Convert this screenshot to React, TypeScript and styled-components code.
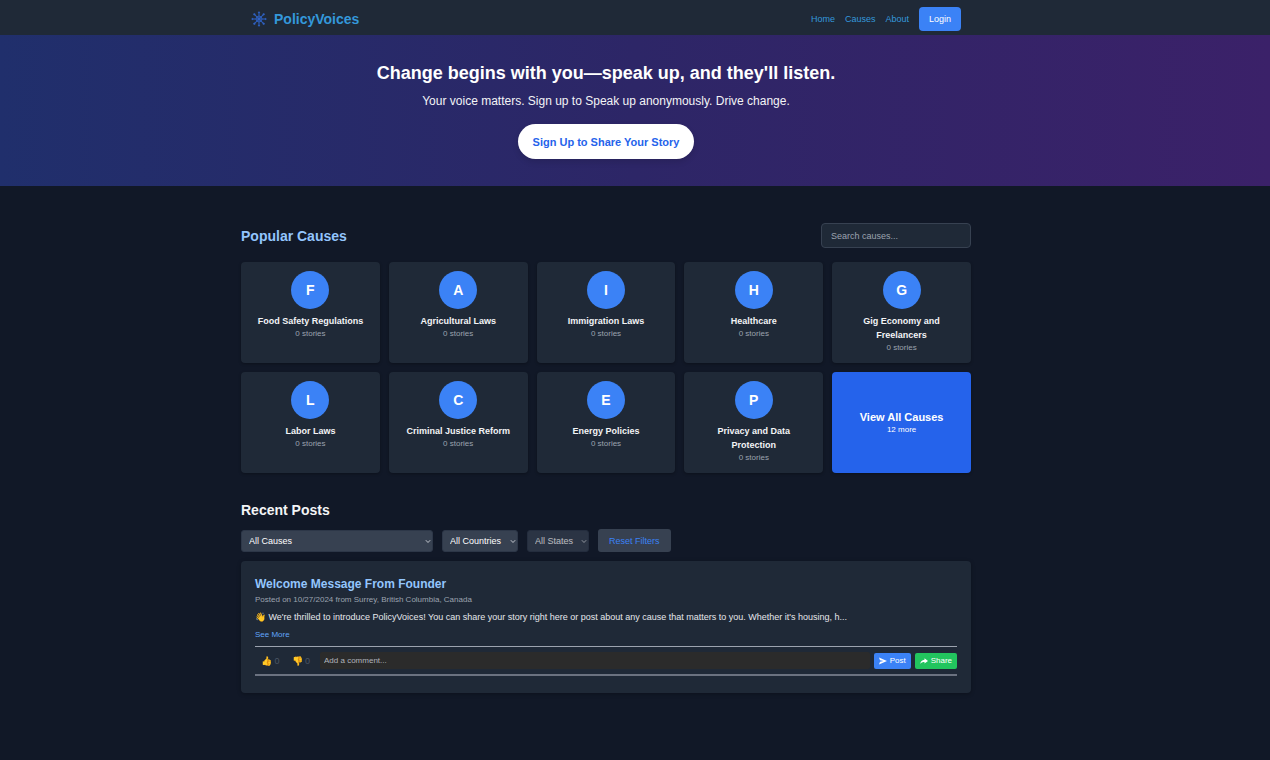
import React from "react";
import styled, { createGlobalStyle } from "styled-components";

const GlobalStyle = createGlobalStyle`
  *, *::before, *::after { box-sizing: border-box; }
  body {
    margin: 0;
    background: #111827;
    color: #f3f4f6;
    font-family: "Liberation Sans", Arial, Helvetica, sans-serif;
    font-size: 9px;
    line-height: 14px;
  }
  h1, h2, h3, p { margin: 0; }
  button, input, select { font: inherit; margin: 0; }
  a { color: inherit; text-decoration: none; }
`;

const Page = styled.div`
  min-height: 100vh;
  display: flex;
  flex-direction: column;
`;

/* Every band keeps a gutter on the right, so the column sits left of centre. */
const Band = styled.div`
  padding-right: 58px;
`;

const Container = styled.div`
  width: 100%;
  max-width: 730px;
  margin: 0 auto;
`;

const Header = styled(Band).attrs({ as: "header" })`
  background: #1f2937;
`;

const NavBar = styled(Container)`
  display: flex;
  align-items: center;
  justify-content: space-between;
  padding: 7px 10px 4px;
`;

const Brand = styled.a`
  display: flex;
  align-items: center;
  gap: 7px;
  color: #3498db;
  font-size: 14px;
  font-weight: 700;
`;

const NavLinks = styled.nav`
  display: flex;
  align-items: center;
  gap: 10px;
  color: #3498db;
`;

const LoginButton = styled.button`
  height: 24px;
  padding: 0 10px;
  border: 0;
  border-radius: 4px;
  background: #3b82f6;
  color: #fff;
`;

const Hero = styled(Band).attrs({ as: "section" })`
  display: flex;
  flex-direction: column;
  align-items: center;
  padding-top: 26px;
  padding-bottom: 27px;
  text-align: center;
  background: linear-gradient(90deg, #202f6c, #2d2667 50%, #3b2169);
`;

const HeroTitle = styled.h1`
  font-size: 18px;
  line-height: 24px;
  color: #fff;
`;

const HeroText = styled.p`
  margin-top: 8px;
  font-size: 12px;
  line-height: 16px;
`;

const SignUpButton = styled.button`
  height: 35px;
  margin-top: 15px;
  padding: 0 15px;
  border: 0;
  border-radius: 18px;
  background: #fff;
  color: #2563eb;
  font-size: 11px;
  font-weight: 700;
  box-shadow: 0 3px 6px rgba(0, 0, 0, 0.12);
`;

const Main = styled(Band).attrs({ as: "main" })`
  flex: 1;
  padding-top: 37px;
  padding-bottom: 62px;
`;

const SectionHead = styled.div`
  display: flex;
  align-items: center;
  justify-content: space-between;
  margin-bottom: 14px;
`;

const SectionTitle = styled.h2<{ $tone?: string }>`
  font-size: 14px;
  line-height: 20px;
  color: ${(p) => p.$tone ?? "#f3f4f6"};
`;

const SearchInput = styled.input`
  width: 150px;
  height: 25px;
  padding: 0 9px;
  border: 1px solid #374151;
  border-radius: 4px;
  background: #1f2937;
  color: #f3f4f6;
  &::placeholder { color: #9ca3af; opacity: 1; }
`;

const CauseGrid = styled.div`
  display: grid;
  grid-template-columns: repeat(5, 1fr);
  gap: 9px;
`;

const CauseCard = styled.a`
  display: flex;
  flex-direction: column;
  align-items: center;
  min-height: 101px;
  padding: 9px;
  border-radius: 4px;
  background: #1f2937;
  text-align: center;
  box-shadow: 0 1px 3px rgba(0, 0, 0, 0.3);
`;

const AllCausesCard = styled(CauseCard)`
  justify-content: center;
  background: #2563eb;
  color: #fff;
`;

const Initial = styled.span`
  display: flex;
  align-items: center;
  justify-content: center;
  width: 38px;
  height: 38px;
  margin-bottom: 5px;
  border-radius: 50%;
  background: #3b82f6;
  color: #fff;
  font-size: 14px;
  font-weight: 700;
`;

const CauseName = styled.h3<{ $large?: boolean }>`
  max-width: 112px;
  font-size: ${(p) => (p.$large ? 11 : 9)}px;
  line-height: 14px;
`;

const StoryCount = styled.span<{ $bright?: boolean }>`
  font-size: 8px;
  line-height: 12px;
  color: ${(p) => (p.$bright ? "#fff" : "#9ca3af")};
`;

const Posts = styled.section`
  padding-top: 27px;
`;

const Filters = styled.div`
  display: flex;
  align-items: center;
  gap: 9px;
  margin: 9px 0;
`;

const SelectWrap = styled.label<{ $width: number; $dim?: boolean }>`
  position: relative;
  display: block;
  width: ${(p) => p.$width}px;
  opacity: ${(p) => (p.$dim ? 0.7 : 1)};
`;

const Select = styled.select`
  display: block;
  width: 100%;
  height: 22px;
  padding: 0 7px;
  border: 1px solid #2d3748;
  border-radius: 3px;
  background: #374151;
  color: #fff;
  opacity: 1;
  appearance: none;
`;

const Chevron = styled.svg`
  position: absolute;
  top: 9px;
  right: 2px;
  width: 6px;
  height: 5px;
  pointer-events: none;
`;

const ResetButton = styled.button`
  height: 23px;
  padding: 0 11px;
  border: 0;
  border-radius: 3px;
  background: #374151;
  color: #3b82f6;
`;

const PostCard = styled.article`
  padding: 15px 14px 17px;
  border-radius: 4px;
  background: #1f2937;
  box-shadow: 0 1px 4px rgba(0, 0, 0, 0.3);
`;

const PostTitle = styled.h3`
  font-size: 12px;
  line-height: 16px;
  color: #93c5fd;
`;

const PostMeta = styled.p`
  margin-top: 2px;
  font-size: 8px;
  line-height: 12px;
  color: #9ca3af;
`;

const PostBody = styled.p`
  margin-top: 4px;
  color: #e5e7eb;
`;

const SeeMore = styled.button`
  display: block;
  margin-top: 5px;
  padding: 0;
  border: 0;
  background: none;
  color: #60a5fa;
  font-size: 8px;
  line-height: 12px;
`;

const Actions = styled.div`
  display: flex;
  align-items: center;
  gap: 4px;
  height: 30px;
  margin-top: 5px;
  border-top: 1px solid #9ca3af;
  border-bottom: 2px solid #6b7280;
`;

const Votes = styled.div`
  display: flex;
`;

const VoteButton = styled.button`
  padding: 0 6px;
  border: 0;
  background: none;
  color: #4b5563;
  line-height: 14px;
`;

const CommentInput = styled.input`
  flex: 1;
  min-width: 0;
  height: 17px;
  padding: 0 4px;
  border: 0;
  border-radius: 2px;
  background: #2b2b2b;
  color: #e5e7eb;
  font-size: 8px;
  &::placeholder { color: #b0b4bb; opacity: 1; }
`;

const ActionButton = styled.button<{ $color: string }>`
  display: flex;
  align-items: center;
  gap: 3px;
  height: 16px;
  padding: 0 5px;
  border: 0;
  border-radius: 2px;
  background: ${(p) => p.$color};
  color: #fff;
  font-size: 8px;
`;

const spokes = [0, 45, 90, 135, 180, 225, 270, 315];

const Logo = () => (
  <svg width="16" height="16" viewBox="0 0 32 32" fill="none" stroke="#2f62c4" strokeWidth="2" aria-hidden="true">
    {spokes.map((a) => (
      <g key={a} transform={`rotate(${a} 16 16)`}>
        <path d="M16 16V3" />
        <circle cx="16" cy="2.8" r="1.2" fill="#2f62c4" />
      </g>
    ))}
    <circle cx="16" cy="16" r="6" strokeWidth="1.6" />
    <circle cx="16" cy="16" r="2" fill="#2f62c4" />
  </svg>
);

const causes = [
  "Food Safety Regulations",
  "Agricultural Laws",
  "Immigration Laws",
  "Healthcare",
  "Gig Economy and Freelancers",
  "Labor Laws",
  "Criminal Justice Reform",
  "Energy Policies",
  "Privacy and Data Protection",
];

const filters = [
  { label: "All Causes", width: 192 },
  { label: "All Countries", width: 76 },
  { label: "All States", width: 62, disabled: true },
];

export default function App() {
  return (
    <Page>
      <GlobalStyle />
      <Header>
        <NavBar>
          <Brand href="#">
            <Logo />
            PolicyVoices
          </Brand>
          <NavLinks>
            <a href="#home">Home</a>
            <a href="#causes">Causes</a>
            <a href="#about">About</a>
            <LoginButton>Login</LoginButton>
          </NavLinks>
        </NavBar>
      </Header>

      <Hero>
        <HeroTitle>Change begins with you—speak up, and they'll listen.</HeroTitle>
        <HeroText>Your voice matters. Sign up to Speak up anonymously. Drive change.</HeroText>
        <SignUpButton>Sign Up to Share Your Story</SignUpButton>
      </Hero>

      <Main>
        <Container>
          <section id="causes">
            <SectionHead>
              <SectionTitle $tone="#93c5fd">Popular Causes</SectionTitle>
              <SearchInput type="search" placeholder="Search causes..." aria-label="Search causes" />
            </SectionHead>
            <CauseGrid>
              {causes.map((name) => (
                <CauseCard href="#" key={name}>
                  <Initial>{name[0]}</Initial>
                  <CauseName>{name}</CauseName>
                  <StoryCount>0 stories</StoryCount>
                </CauseCard>
              ))}
              <AllCausesCard href="#">
                <CauseName $large>View All Causes</CauseName>
                <StoryCount $bright>12 more</StoryCount>
              </AllCausesCard>
            </CauseGrid>
          </section>

          <Posts>
            <SectionTitle>Recent Posts</SectionTitle>
            <Filters>
              {filters.map((f) => (
                <SelectWrap key={f.label} $width={f.width} $dim={f.disabled}>
                  <Select aria-label={f.label} disabled={f.disabled}>
                    <option>{f.label}</option>
                  </Select>
                  <Chevron viewBox="0 0 6 5" fill="none" stroke="#d1d5db" strokeWidth="0.9" aria-hidden="true">
                    <path d="M0.8 1.2L3 3.5L5.2 1.2" />
                  </Chevron>
                </SelectWrap>
              ))}
              <ResetButton>Reset Filters</ResetButton>
            </Filters>

            <PostCard>
              <PostTitle>Welcome Message From Founder</PostTitle>
              <PostMeta>Posted on 10/27/2024 from Surrey, British Columbia, Canada</PostMeta>
              <PostBody>
                👋 We're thrilled to introduce PolicyVoices! You can share your story right here or post about any cause
                that matters to you. Whether it's housing, h...
              </PostBody>
              <SeeMore>See More</SeeMore>
              <Actions>
                <Votes>
                  <VoteButton aria-label="Like">👍 0</VoteButton>
                  <VoteButton aria-label="Dislike">👎 0</VoteButton>
                </Votes>
                <CommentInput placeholder="Add a comment..." aria-label="Add a comment" />
                <ActionButton $color="#3b82f6">
                  <svg width="8" height="8" viewBox="0 0 16 16" fill="#fff" aria-hidden="true">
                    <path d="M0 1L16 8L0 15L2 9.5L9 8L2 6.5Z" />
                  </svg>
                  Post
                </ActionButton>
                <ActionButton $color="#22c55e">
                  <svg width="8" height="8" viewBox="0 0 16 16" fill="#fff" aria-hidden="true">
                    <path d="M9 2.5L16 8L9 13V9.8C5 9.8 2.5 10.8 0.5 14C1 9 4 6 9 5.6Z" />
                  </svg>
                  Share
                </ActionButton>
              </Actions>
            </PostCard>
          </Posts>
        </Container>
      </Main>
    </Page>
  );
}
